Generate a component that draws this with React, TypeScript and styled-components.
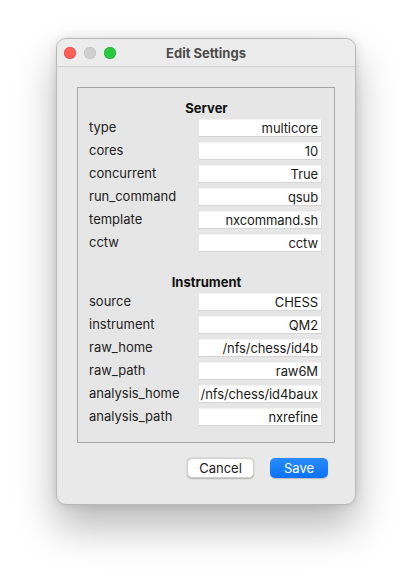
import React from "react";
import styled, { createGlobalStyle } from "styled-components";

const Global = createGlobalStyle`
  html, body { margin: 0; padding: 0; background: #ffffff; }
  body { font-family: Inter, "Noto Sans", "Liberation Sans", sans-serif; -webkit-font-smoothing: antialiased; }
`;

const Page = styled.div`
  width: 412px;
  height: 579px;
  padding: 38px 0 0 56px;
  box-sizing: border-box;
  background: #ffffff;
`;

const Window = styled.div`
  width: 300px;
  height: 467px;
  box-sizing: border-box;
  border-radius: 10px;
  border: 1px solid #b9b9b9;
  background: #e9e9e9;
  box-shadow: 0 22px 40px rgba(0, 0, 0, 0.28), 0 0 10px rgba(0, 0, 0, 0.12);
  overflow: hidden;
  display: flex;
  flex-direction: column;
`;

const TitleBar = styled.div`
  height: 28px;
  flex: none;
  box-sizing: border-box;
  border-bottom: 1px solid #d2d2d2;
  background: #ececec;
  display: flex;
  align-items: center;
  position: relative;
  padding-left: 7px;
`;

const Lights = styled.div`
  display: flex;
  gap: 8px;
  margin-top: 1px;
`;

const Light = styled.span<{ $c: string; $b: string }>`
  width: 12px;
  height: 12px;
  border-radius: 50%;
  background: ${(p) => p.$c};
  box-shadow: inset 0 0 0 0.5px ${(p) => p.$b};
`;

const Title = styled.div`
  position: absolute;
  left: 0;
  right: 0;
  top: 0;
  bottom: 0;
  display: flex;
  align-items: center;
  justify-content: center;
  font-size: 13px;
  font-weight: 700;
  color: #4d4d4d;
  padding-top: 1px;
`;

const Body = styled.div`
  flex: 1;
  display: flex;
  flex-direction: column;
  padding: 20px 20px 0 20px;
`;

const Group = styled.div`
  height: 356px;
  box-sizing: border-box;
  border: 1px solid #a6a6a6;
  background: #e6e6e6;
  padding: 12px 12px 0 11px;
  display: flex;
  flex-direction: column;
`;

const Heading = styled.div<{ $top: number }>`
  margin-top: ${(p) => p.$top}px;
  height: 16px;
  line-height: 16px;
  text-align: center;
  font-size: 13px;
  font-weight: 700;
  color: #111;
  margin-bottom: 3px;
  padding-left: 2px;
`;

const Rows = styled.div`
  display: flex;
  flex-direction: column;
  gap: 5px;
`;

const Row = styled.div`
  display: flex;
  align-items: center;
  justify-content: space-between;
  height: 18px;
`;

const Label = styled.span`
  font-size: 13px;
  color: #222;
  margin-top: -2px;
`;

const Field = styled.div`
  width: 123px;
  height: 18px;
  box-sizing: border-box;
  background: #ffffff;
  border-bottom: 1px solid #d4d4d4;
  border-right: 1px solid #dcdcdc;
  border-top: 1px solid #f2f2f2;
  font-size: 13px;
  color: #1a1a1a;
  text-align: right;
  padding-right: 3px;
  line-height: 16px;
  white-space: nowrap;
  overflow: hidden;
  letter-spacing: -0.1px;
`;

const Buttons = styled.div`
  display: flex;
  justify-content: flex-end;
  gap: 16px;
  padding: 15px 7px 0 0;
`;

const Button = styled.button<{ $primary?: boolean; $w: number }>`
  width: ${(p) => p.$w}px;
  height: 20px;
  border-radius: 5px;
  font-family: inherit;
  font-size: 13px;
  padding: 0 0 1px;
  cursor: pointer;
  border: ${(p) => (p.$primary ? "none" : "0.5px solid #cfcfcf")};
  background: ${(p) => (p.$primary ? "linear-gradient(#2a8bff, #0a73f5)" : "#ffffff")};
  color: ${(p) => (p.$primary ? "#ffffff" : "#1a1a1a")};
  box-shadow: ${(p) => (p.$primary ? "0 0.5px 1px rgba(0,0,0,0.2)" : "0 0.5px 1.5px rgba(0,0,0,0.25)")};
`;

const server: [string, string][] = [
  ["type", "multicore"],
  ["cores", "10"],
  ["concurrent", "True"],
  ["run_command", "qsub"],
  ["template", "nxcommand.sh"],
  ["cctw", "cctw"],
];

const instrument: [string, string][] = [
  ["source", "CHESS"],
  ["instrument", "QM2"],
  ["raw_home", "/nfs/chess/id4b"],
  ["raw_path", "raw6M"],
  ["analysis_home", "/nfs/chess/id4baux"],
  ["analysis_path", "nxrefine"],
];

function Section({ title, rows, top }: { title: string; rows: [string, string][]; top: number }) {
  return (
    <>
      <Heading $top={top}>{title}</Heading>
      <Rows>
        {rows.map(([k, v]) => (
          <Row key={k}>
            <Label>{k}</Label>
            <Field>{v}</Field>
          </Row>
        ))}
      </Rows>
    </>
  );
}

export default function App() {
  return (
    <Page>
      <Global />
      <Window>
        <TitleBar>
          <Lights>
            <Light $c="#fe5f57" $b="#e14640" />
            <Light $c="#d0d0d0" $b="#bdbdbd" />
            <Light $c="#28c840" $b="#1aab29" />
          </Lights>
          <Title>Edit Settings</Title>
        </TitleBar>
        <Body>
          <Group>
            <Section title="Server" rows={server} top={0} />
            <Section title="Instrument" rows={instrument} top={22} />
          </Group>
          <Buttons>
            <Button $w={67}>Cancel</Button>
            <Button $primary $w={58}>Save</Button>
          </Buttons>
        </Body>
      </Window>
    </Page>
  );
}
